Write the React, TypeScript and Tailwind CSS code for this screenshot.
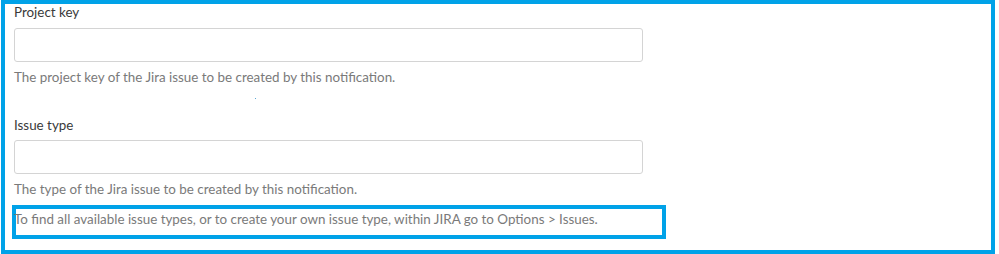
export default function App() {
  return (
    <div className="h-[254px] w-[999px] bg-white font-['Lato',sans-serif]">
      <div className="ml-[1px] h-[254px] w-[994px] border-4 border-[#00a2e8] px-[9px]">
        <div className="flex flex-col">
          <label className="text-[13.4px] leading-[17px] text-[#3a3a3a]">Project key</label>
          <input className="mt-[7px] h-[34px] w-[629px] rounded-[3px] border border-[#d4d4d4] bg-white" />
          <p className="mt-[7px] text-[13.4px] leading-[17px] text-[#7a7a7a]">
            The project key of the Jira issue to be created by this notification.
          </p>
          <div className="relative h-[31px]">
            <span className="absolute left-[241px] top-[12px] h-[1px] w-[1px] bg-[#5aa9d6]" />
          </div>
          <label className="text-[13.4px] leading-[17px] text-[#3a3a3a]">Issue type</label>
          <input className="mt-[6px] h-[34px] w-[629px] rounded-[3px] border border-[#d4d4d4] bg-white" />
          <p className="mt-[7px] text-[13.4px] leading-[17px] text-[#7a7a7a]">
            The type of the Jira issue to be created by this notification.
          </p>
          <div className="ml-[-2px] mt-[7px] h-[34px] w-[654px] border-4 border-[#00a2e8]">
            <p className="ml-[-2px] mt-[2px] text-[13.4px] leading-[17px] text-[#7a7a7a]">
              To find all available issue types, or to create your own issue type, within JIRA go to Options &gt; Issues.
            </p>
          </div>
        </div>
      </div>
    </div>
  );
}
